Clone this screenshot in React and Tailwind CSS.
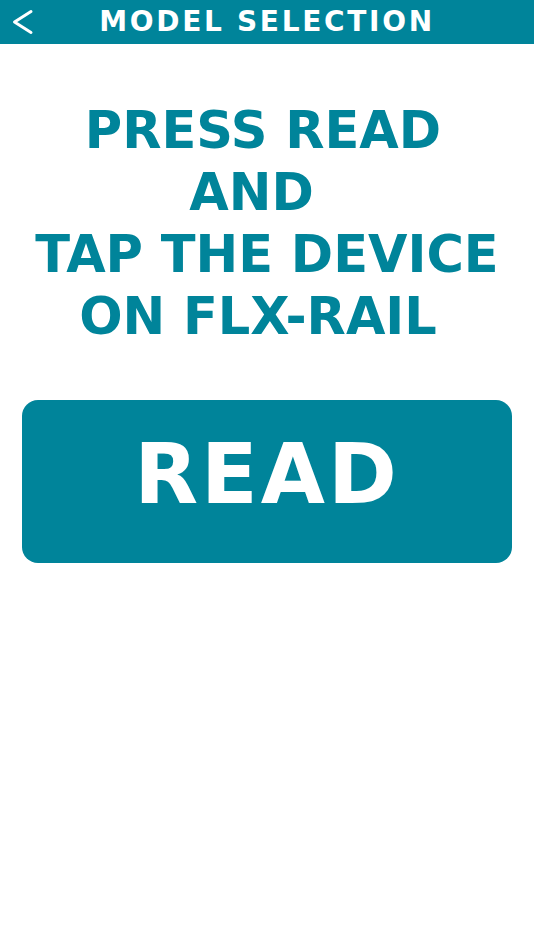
const font = { fontFamily: '"DejaVu Sans", "Liberation Sans", sans-serif' };

export default function App() {
  return (
    <div className="min-h-screen bg-white flex flex-col" style={font}>
      {/* Header */}
      <div className="h-[44px] bg-[#00849a] flex items-center relative">
        <button className="absolute left-[9px] top-[8px]">
          <svg width="28" height="28" viewBox="0 0 28 28" fill="none" stroke="white" strokeWidth="3" strokeLinecap="round" strokeLinejoin="round">
            <path d="M22 3.5 L5.5 14 L22 24.5" />
          </svg>
        </button>
        <h1 className="w-full text-center text-white font-bold text-[28px] tracking-[2.7px] leading-none">
          MODEL SELECTION
        </h1>
      </div>

      {/* Instructions */}
      <div className="pt-[56px] flex flex-col items-center text-[#00849a] font-bold text-[51px] leading-[62px] text-center">
        <p className="pr-[8px]">PRESS READ</p>
        <p className="pr-[31px]">AND</p>
        <p>TAP THE DEVICE</p>
        <p className="pr-[18px]">ON FLX-RAIL</p>
      </div>

      {/* Read button */}
      <div className="px-[22px] pt-[52px]">
        <button className="w-full h-[163px] bg-[#00849a] rounded-[16px] flex items-center justify-center pb-[14px]">
          <span className="text-white font-bold text-[83px] tracking-[3px] leading-none">READ</span>
        </button>
      </div>
    </div>
  );
}
